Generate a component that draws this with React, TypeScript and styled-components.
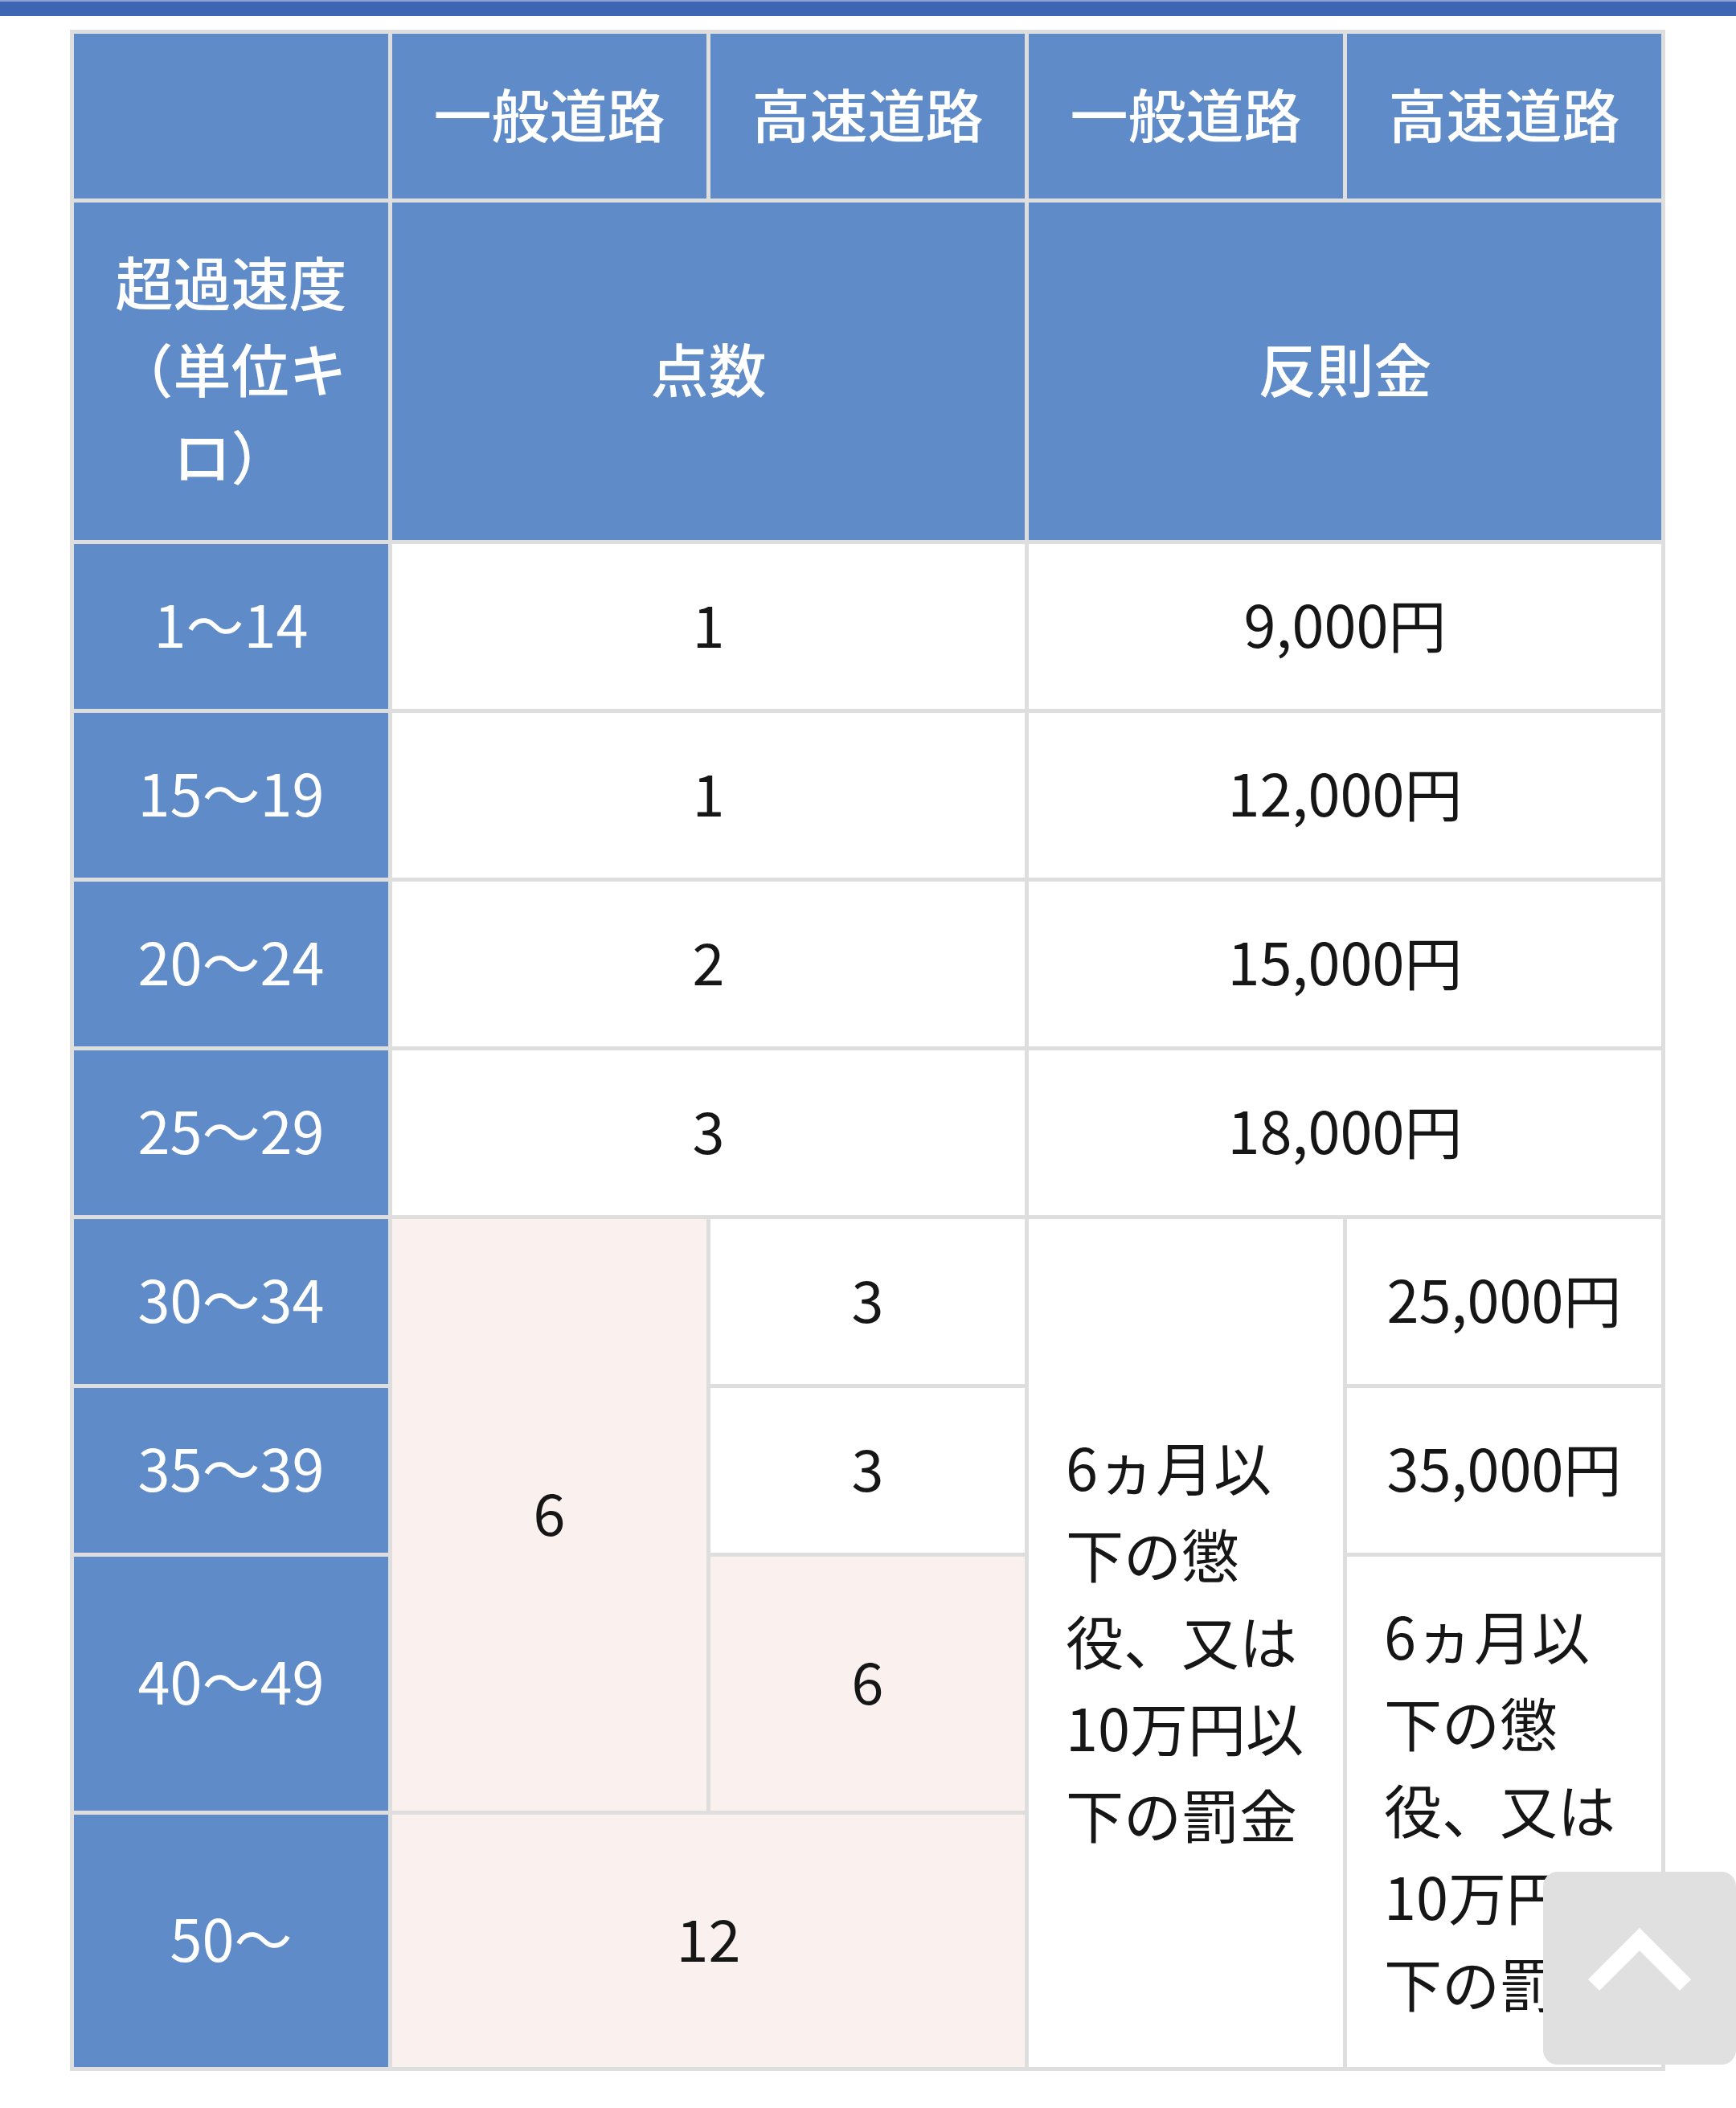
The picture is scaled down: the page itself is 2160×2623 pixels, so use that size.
import React from "react";
import styled, { createGlobalStyle } from "styled-components";

const GlobalStyle = createGlobalStyle`
    html, body {
        margin: 0;
        padding: 0;
        background: #ffffff;
    }
    body {
        font-family: "Noto Sans CJK JP", "Noto Sans", sans-serif;
    }
`;

const Page = styled.div`
    position: relative;
    min-height: 2623px;
    width: 2160px;
    overflow: hidden;
`;

const TopBar = styled.div`
    height: 18px;
    border-top: 2px solid #8aa2d6;
    background-color: #3e65b4;
`;

const Content = styled.div`
    padding: 17px 0 0 87px;
`;

const Table = styled.table`
    table-layout: fixed;
    width: 1985px;
    border-collapse: separate;
    border-spacing: 0;
    border-top: 5px solid #dedede;
    border-left: 5px solid #dedede;
    font-size: 72px;
    line-height: 108px;
`;

const Col = styled.col`
    width: 396px;
`;

const Row = styled.tr<{ $h: number }>`
    height: ${(p) => p.$h}px;
`;

const Head = styled.th<{ $label?: boolean }>`
    background-color: #5f8bc8;
    color: #ffffff;
    font-weight: ${(p) => (p.$label ? 400 : 500)};
    text-align: center;
    vertical-align: middle;
    padding: 0 40px 10px;
    border-right: 5px solid #dedede;
    border-bottom: 5px solid #dedede;
`;

const Cell = styled.td<{ $pink?: boolean; $note?: boolean }>`
    background-color: ${(p) => (p.$pink ? "#faf0ee" : "#ffffff")};
    color: #161616;
    font-weight: 400;
    text-align: ${(p) => (p.$note ? "left" : "center")};
    vertical-align: middle;
    padding: ${(p) => (p.$note ? "0 34px 10px 46px" : "0 40px 10px")};
    border-right: 5px solid #dedede;
    border-bottom: 5px solid #dedede;
`;

const TopButton = styled.button`
    position: absolute;
    right: 0;
    bottom: 54px;
    width: 240px;
    height: 240px;
    padding: 0;
    border: none;
    border-radius: 18px;
    background-color: #e0e0e0;
    display: flex;
    align-items: center;
    justify-content: center;
    cursor: pointer;
`;

const note = "6ヵ月以下の懲役、又は10万円以下の罰金";

function App() {
    return (
        <Page>
            <GlobalStyle />
            <TopBar />
            <Content>
                <Table>
                    <colgroup>
                        <Col />
                        <Col />
                        <Col />
                        <Col />
                        <Col />
                    </colgroup>
                    <thead>
                        <Row $h={210}>
                            <Head></Head>
                            <Head>一般道路</Head>
                            <Head>高速道路</Head>
                            <Head>一般道路</Head>
                            <Head>高速道路</Head>
                        </Row>
                        <Row $h={425}>
                            <Head>超過速度（単位キロ）</Head>
                            <Head colSpan={2}>点数</Head>
                            <Head colSpan={2}>反則金</Head>
                        </Row>
                    </thead>
                    <tbody>
                        <Row $h={210}>
                            <Head $label>1〜14</Head>
                            <Cell colSpan={2}>1</Cell>
                            <Cell colSpan={2}>9,000円</Cell>
                        </Row>
                        <Row $h={210}>
                            <Head $label>15〜19</Head>
                            <Cell colSpan={2}>1</Cell>
                            <Cell colSpan={2}>12,000円</Cell>
                        </Row>
                        <Row $h={210}>
                            <Head $label>20〜24</Head>
                            <Cell colSpan={2}>2</Cell>
                            <Cell colSpan={2}>15,000円</Cell>
                        </Row>
                        <Row $h={210}>
                            <Head $label>25〜29</Head>
                            <Cell colSpan={2}>3</Cell>
                            <Cell colSpan={2}>18,000円</Cell>
                        </Row>
                        <Row $h={210}>
                            <Head $label>30〜34</Head>
                            <Cell $pink rowSpan={3}>6</Cell>
                            <Cell>3</Cell>
                            <Cell $note rowSpan={4}>{note}</Cell>
                            <Cell>25,000円</Cell>
                        </Row>
                        <Row $h={210}>
                            <Head $label>35〜39</Head>
                            <Cell>3</Cell>
                            <Cell>35,000円</Cell>
                        </Row>
                        <Row $h={321}>
                            <Head $label>40〜49</Head>
                            <Cell $pink>6</Cell>
                            <Cell $note rowSpan={2}>{note}</Cell>
                        </Row>
                        <Row $h={319}>
                            <Head $label>50〜</Head>
                            <Cell $pink colSpan={2}>12</Cell>
                        </Row>
                    </tbody>
                </Table>
            </Content>
            <TopButton aria-label="ページトップへ">
                <svg width="240" height="240" viewBox="0 0 240 240">
                    <polyline
                        points="63,141 120,84 177,141"
                        fill="none"
                        stroke="#ffffff"
                        strokeWidth="20"
                        strokeLinecap="butt"
                        strokeLinejoin="miter"
                    />
                </svg>
            </TopButton>
        </Page>
    );
}

export default App;
